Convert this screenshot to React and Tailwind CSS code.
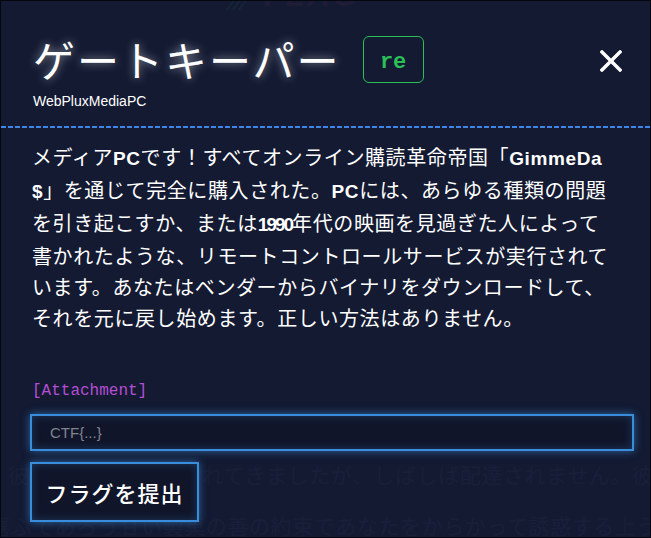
import { useState } from 'react';

const jp = 'font-["Noto_Sans_CJK_JP",sans-serif]';

function CloseIcon() {
    return (
        <svg width="22" height="22" viewBox="0 0 22 22" fill="none" stroke="white" strokeWidth="3.4" strokeLinecap="square">
            <line x1="2" y1="2" x2="20" y2="20" />
            <line x1="20" y1="2" x2="2" y2="20" />
        </svg>
    );
}

export default function App() {
    const [flag, setFlag] = useState('');

    return (
        <div className="relative w-[651px] h-[538px] overflow-hidden bg-[#141a32]">
            {/* Page behind the modal */}
            <div className={`h-full flex flex-col text-[#545d7d] ${jp}`}>
                <div className="h-[18px] overflow-hidden flex items-end pl-[222px]">
                    <div className="flex items-end gap-[12px] -mb-[1px] opacity-70">
                        <svg width="30" height="20" viewBox="0 0 30 20" stroke="#2fd07a" strokeWidth="2">
                            <line x1="4" y1="20" x2="16" y2="4" />
                            <line x1="10" y1="20" x2="22" y2="4" />
                            <line x1="16" y1="20" x2="28" y2="4" />
                        </svg>
                        <span className="font-['Liberation_Sans',sans-serif] font-bold italic text-[32px] leading-[32px] tracking-[2px] text-[#ff3f6a]">FLAG</span>
                    </div>
                </div>
                <div className="mt-[451px] pl-[8px] text-[21px] leading-[26px] tracking-[0.6px] whitespace-nowrap">
                    彼らは長い間約束されてきましたが、しばしば配達されません。彼
                </div>
                <div className="mt-[25px] -ml-[10px] text-[21px] leading-[26px] tracking-[0.6px] whitespace-nowrap">
                    喜ぶであろう甘い製菓の善の約束であなたをからかって誘惑する上う
                </div>
            </div>

            {/* Modal */}
            <div className="absolute inset-0 bg-[#141a32]/[0.92] border border-[#05070f] flex flex-col">
                <div className="flex items-start pl-[32px] pr-[28px] pt-[33px]">
                    <div className="flex flex-col">
                        <div className="flex items-center">
                            <h1 className={`${jp} text-white text-[42px] leading-[50px] font-normal tracking-[2px] [text-shadow:0_0_10px_rgba(255,255,255,0.55)]`}>
                                ゲートキーパー
                            </h1>
                            <span className="ml-[22px] w-[61px] h-[47px] border-[1.5px] border-[#2bbf57] rounded-[6px] flex items-center justify-center pt-[6px] font-['Liberation_Mono',monospace] font-bold text-[22px] text-[#2bbf57]">
                                re
                            </span>
                        </div>
                        <p className="mt-[9px] font-['Liberation_Sans',sans-serif] text-[14px] leading-[16px] text-white">WebPluxMediaPC</p>
                    </div>
                    <button className="ml-auto mt-[16px]">
                        <CloseIcon />
                    </button>
                </div>

                <div className="mt-[17px] h-[2px] bg-[repeating-linear-gradient(90deg,#3f86e8_0_5px,transparent_5px_7px)]" />

                <div className="px-[31px] flex flex-col">
                    <p className={`mt-[13px] ${jp} text-white text-[20px] leading-[31px] tracking-[0.6px] whitespace-nowrap`}>
                        メディア<b className="font-['Liberation_Sans',sans-serif] text-[19px]">PC</b>です！すべてオンライン購読革命帝国「<b className="font-['Liberation_Sans',sans-serif] text-[19px]">GimmeDa</b><br />
                        <b className="font-['Liberation_Sans',sans-serif] text-[19px]">$</b>」を通じて完全に購入された。<b className="font-['Liberation_Sans',sans-serif] text-[19px]">PC</b>には、あらゆる種類の問題<br />
                        を引き起こすか、または<b className="font-['Liberation_Sans',sans-serif] text-[19px] tracking-[-2px]">1990</b>年代の映画を見過ぎた人によって<br />
                        書かれたような、リモートコントロールサービスが実行されて<br />
                        います。あなたはベンダーからバイナリをダウンロードして、<br />
                        それを元に戻し始めます。正しい方法はありません。
                    </p>

                    <p className="mt-[48px] font-['Liberation_Mono',monospace] text-[16px] leading-[20px] text-[#b54ed6]">[Attachment]</p>

                    <input
                        value={flag}
                        onChange={e => setFlag(e.target.value)}
                        placeholder="CTF{...}"
                        className="mt-[13px] -ml-[2px] w-[604px] h-[37px] border-2 border-[#3a8ddb] bg-[#10152a] pl-[18px] font-['Liberation_Sans',sans-serif] text-[15px] text-white placeholder:text-[#80848e] outline-none shadow-[0_0_8px_rgba(58,141,219,0.65),inset_0_0_8px_rgba(58,141,219,0.3)]"
                    />

                    <button className={`mt-[11px] -ml-[2px] w-[169px] h-[60px] border-2 border-[#3a8ddb] bg-[#10152a] ${jp} text-white text-[22px] font-medium tracking-[1px] shadow-[0_0_8px_rgba(58,141,219,0.65),inset_0_0_8px_rgba(58,141,219,0.3)]`}>
                        フラグを提出
                    </button>
                </div>
            </div>
        </div>
    );
}
